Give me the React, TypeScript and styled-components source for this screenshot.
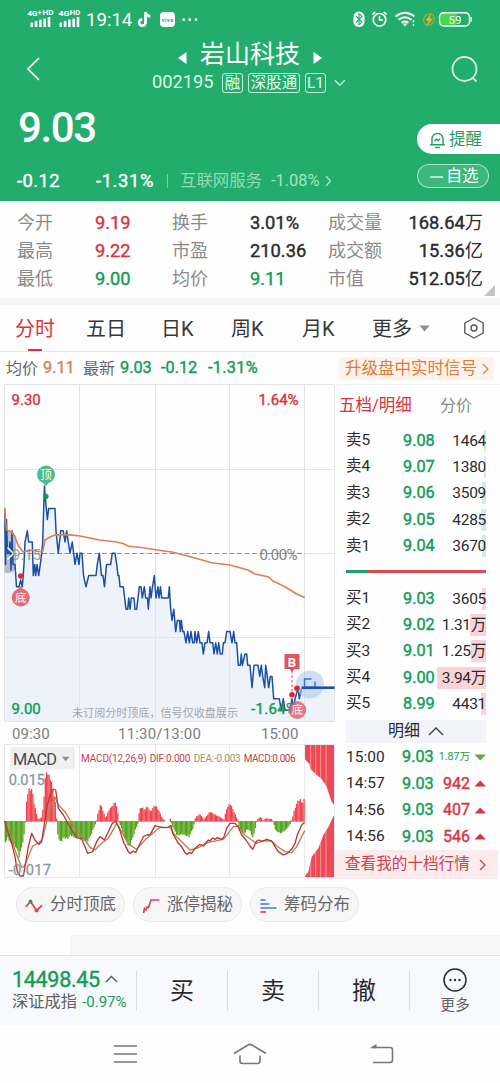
import React from "react";
import styled, { createGlobalStyle } from "styled-components";

const GREEN = "#22ad6d";
const DOWN = "#129c58";
const UP = "#d8343f";
const INK = "#2b2b2d";
const MUTED = "#8b8b8b";
const LINE = "#e6e6e8";

const GlobalStyle = createGlobalStyle`
  * { box-sizing: border-box; }
  body {
    margin: 0;
    background: #fff;
    font-family: Roboto, "Noto Sans CJK SC", sans-serif;
    color: ${INK};
  }
  svg { display: block; flex: none; }
`;

const Screen = styled.div`
  width: 500px;
  height: 1083px;
  overflow: hidden;
  display: flex;
  flex-direction: column;
  background: #fefefe;
`;

const Txt = styled.span<{ $size: number; $color?: string; $strong?: boolean; $ls?: number; $ml?: number; $w?: number }>`
  flex: none;
  font-size: ${(p) => p.$size}px;
  line-height: 1;
  white-space: nowrap;
  color: ${(p) => p.$color ?? "inherit"};
  -webkit-text-stroke: ${(p) => (p.$strong ? 0.4 : 0)}px currentColor;
  letter-spacing: ${(p) => p.$ls ?? 0}px;
  margin-left: ${(p) => p.$ml ?? 0}px;
  width: ${(p) => (p.$w ? `${p.$w}px` : "auto")};
`;

/* ---------- green header ---------- */

const Header = styled.header`
  height: 201px;
  flex: none;
  background: ${GREEN};
  color: #fff;
  display: flex;
  flex-direction: column;
`;

const StatusBar = styled.div`
  height: 38px;
  padding: 0 28px 0 27px;
  display: flex;
  justify-content: space-between;
`;

const StatusGroup = styled.div`
  display: flex;
  align-items: center;
`;

const Clock = styled.span`
  width: 50px;
  margin-left: 3px;
  padding-top: 3px;
  font-size: 18.6px;
  line-height: 1;
`;

const TitleRow = styled.div`
  height: 62px;
  padding: 0 22px 0 26px;
  display: flex;
`;

const TitleSide = styled.div`
  width: 27px;
  padding-top: 17px;
`;

const TitleBlock = styled.div`
  display: flex;
  flex-direction: column;
  align-items: flex-start;
  width: 194px;
  margin: 0 105px 0 99px;
`;

const NameLine = styled.div`
  display: flex;
  align-items: center;
  height: 32px;
  margin-left: 26px;
`;

const CodeLine = styled.div`
  display: flex;
  align-items: center;
  height: 25px;
`;

const Badge = styled.span<{ $w: number; $ml: number }>`
  width: ${(p) => p.$w}px;
  height: 20px;
  margin-left: ${(p) => p.$ml}px;
  border: 1px solid rgba(224, 255, 238, 0.85);
  border-radius: 3px;
  font-size: 15.5px;
  line-height: 18px;
  text-align: center;
  color: #e4fff0;
  white-space: nowrap;
  flex: none;
`;

const QuoteRow = styled.div`
  display: flex;
  justify-content: space-between;
  flex: 1;
`;

const PriceBlock = styled.div`
  padding: 7px 0 0 17px;
`;

const Price = styled.div`
  margin-left: 1px;
  font-size: 42px;
  line-height: 42px;
  font-weight: 500;
  letter-spacing: -1.4px;
`;

const ChangeLine = styled.div`
  display: flex;
  align-items: center;
  height: 20px;
  margin-top: 22px;
`;

const Divider = styled.i`
  width: 1px;
  height: 14px;
  margin-left: 11px;
  background: rgba(255, 255, 255, 0.4);
`;

const ActionCol = styled.div`
  width: 83px;
  padding-top: 24px;
  display: flex;
  flex-direction: column;
  gap: 10px;
`;

const AlertPill = styled.div`
  height: 30px;
  display: flex;
  align-items: center;
  padding: 2px 0 0 12px;
  gap: 3px;
  border-radius: 15px 0 0 15px;
  background: #fff;
  color: #2b9a68;
`;

const WatchPill = styled.div`
  width: 72px;
  height: 24px;
  display: flex;
  align-items: center;
  padding: 1px 0 0 12px;
  gap: 3px;
  border: 1px solid rgba(255, 255, 255, 0.6);
  border-radius: 12px;
  background: rgba(255, 255, 255, 0.12);
`;

/* ---------- summary grid ---------- */

const Summary = styled.section`
  height: 97px;
  flex: none;
  padding: 8px 5px 0 17px;
  display: flex;
  justify-content: space-between;
`;

const SummaryGrid = styled.div`
  display: grid;
  grid-template-columns: 78px 77px 78px 78px 155px;
  grid-template-rows: repeat(3, 28px);
  align-items: center;
`;

const Label = styled.span`
  font-size: 18px;
  line-height: 28px;
  color: ${MUTED};
  white-space: nowrap;
`;

const Value = styled.span<{ $color?: string }>`
  font-size: 18.3px;
  line-height: 28px;
  -webkit-text-stroke: 0.4px currentColor;
  color: ${(p) => p.$color ?? INK};
  white-space: nowrap;
`;

const Unit = styled.span`
  -webkit-text-stroke: 0;
`;

const LastPair = styled.div`
  display: flex;
  justify-content: space-between;
  align-items: center;
`;

const Band = styled.div`
  height: 7px;
  flex: none;
  background: #f6f6f7;
`;

/* ---------- period tabs ---------- */

const Tabs = styled.nav`
  height: 47px;
  flex: none;
  display: flex;
  align-items: stretch;
  padding-left: 15px;
  border-bottom: 1px solid ${LINE};
`;

const Tab = styled.div<{ $active?: boolean; $w: number }>`
  width: ${(p) => p.$w}px;
  display: flex;
  flex-direction: column;
  padding-top: 14px;
  font-size: 20px;
  line-height: 20px;
  white-space: nowrap;
  color: ${(p) => (p.$active ? UP : "#39393b")};
`;

const TabMark = styled.i`
  width: 14px;
  height: 2px;
  margin: 10px 0 0 13px;
  background: ${UP};
`;

const TabIcon = styled.div<{ $ml: number }>`
  display: flex;
  align-items: center;
  margin-left: ${(p) => p.$ml}px;
`;

const InfoRow = styled.div`
  height: 32px;
  flex: none;
  display: flex;
  align-items: center;
  padding: 1px 6px 0;
`;

const Upgrade = styled.div`
  width: 155px;
  height: 23px;
  margin-left: auto;
  padding: 1px 5px 0 6px;
  border-radius: 3px;
  background: #fdf3ec;
  display: flex;
  align-items: center;
  justify-content: space-between;
  color: #df7a38;
`;

/* ---------- main area ---------- */

const Main = styled.div`
  height: 495px;
  flex: none;
  display: flex;
`;

const ChartCol = styled.div`
  width: 336px;
  display: flex;
  flex-direction: column;
`;

const TimeAxis = styled.div`
  height: 22px;
  padding: 2px 0 0 12px;
  display: grid;
  grid-template-columns: 106px 143px 1fr;
  align-items: center;
  color: #7d7d80;
`;

const BookCol = styled.aside`
  width: 164px;
  border-top: 1px solid #f1f1f3;
`;

const BookTabs = styled.div`
  height: 42px;
  display: flex;
  align-items: center;
  padding-left: 3px;
`;

const Levels = styled.div`
  width: 140px;
  margin-left: 10px;
`;

const LevelRow = styled.div`
  height: 26.4px;
  padding-top: 1px;
  display: grid;
  grid-template-columns: 57px 34px 49px;
  align-items: center;
`;

const Volume = styled.span<{ $bar: number; $tint: string }>`
  height: 22px;
  text-align: right;
  font-size: 15.5px;
  line-height: 22px;
  letter-spacing: -0.3px;
  white-space: nowrap;
  background: linear-gradient(${(p) => p.$tint}, ${(p) => p.$tint}) right / ${(p) => p.$bar}px 100% no-repeat;
`;

const Ratio = styled.div`
  height: 3px;
  margin: 11px 0 12px;
  background: linear-gradient(90deg, #1f9d63 0 22px, #dd4a50 22px);
`;

const DetailHead = styled.div`
  height: 23px;
  margin: 3px 0 1px;
  background: #f2f4f9;
  display: flex;
  align-items: center;
  justify-content: center;
  gap: 8px;
`;

const TickRow = styled.div`
  height: 26.4px;
  padding-top: 1px;
  display: grid;
  grid-template-columns: 56px 34px 34px 16px;
  align-items: center;
  justify-items: start;
`;

const TickVolume = styled.span<{ $small?: boolean }>`
  justify-self: end;
  font-size: ${(p) => (p.$small ? 10.6 : 16)}px;
  line-height: 1;
  white-space: nowrap;
  color: ${(p) => (p.$small ? DOWN : UP)};
  -webkit-text-stroke: ${(p) => (p.$small ? 0 : 0.4)}px currentColor;
`;

const TenLevels = styled.div`
  width: 163px;
  height: 29px;
  margin: 1px 0 0 -1px;
  padding: 0 12px 0 10px;
  display: flex;
  align-items: center;
  justify-content: space-between;
  background: #fdecee;
  color: #d0414e;
`;

/* ---------- chips and bottom bars ---------- */

const Chips = styled.div`
  height: 56px;
  flex: none;
  padding: 8px 0 0 16px;
  display: flex;
  gap: 8px;
`;

const Chip = styled.div`
  width: 109px;
  height: 35px;
  padding: 2px 0 0 8px;
  display: flex;
  align-items: center;
  gap: 7px;
  border: 1px solid #e9e9ea;
  border-radius: 18px;
  background: #f7f7f8;
  color: #67676a;
`;

const Strip = styled.div`
  height: 20px;
  flex: none;
  margin-left: 70px;
  background: #f7f7f7;
`;

const TradeBar = styled.footer`
  height: 70px;
  flex: none;
  display: flex;
  align-items: center;
  border-top: 1px solid #e2e2e4;
  background: #f8f9fc;
`;

const IndexBox = styled.div`
  width: 136px;
  height: 42px;
  margin-top: -2px;
  padding-left: 12px;
  display: flex;
  flex-direction: column;
  justify-content: space-between;
`;

const IndexLine = styled.div`
  display: flex;
  align-items: center;
`;

const TradeButton = styled.div`
  width: 91px;
  height: 40px;
  display: flex;
  align-items: center;
  justify-content: center;
  border-left: 1px solid #dcdde0;
  font-size: 24px;
  line-height: 1;
`;

const MoreButton = styled(TradeButton)`
  flex-direction: column;
  gap: 6px;
`;

const SystemNav = styled.div`
  flex: 1;
  padding: 0 106px 0 113px;
  display: grid;
  grid-template-columns: 120px 136px 25px;
  align-items: center;
`;

/* ---------- data ---------- */

type Point = [number, number];

// x position and last price in cents above 9.00
const PRICES: Point[] = [
  [4.7, 19], [5.5, 14], [6.5, 18], [7.5, 15], [9, 15], [10, 16], [11, 13.5], [12, 17], [13, 14], [15, 14], [16.5, 12],
  [19, 12], [20.7, 12.6], [22.3, 12], [24, 14], [25, 16], [27.3, 17], [28.7, 16], [32.3, 16], [33.3, 13], [34.7, 14],
  [35.7, 13], [37, 14], [38.7, 13], [40.3, 14], [41.7, 15], [42.7, 16], [43.7, 19], [44.5, 21], [45.2, 20], [46.3, 19],
  [47.3, 18], [48.7, 19], [55, 19], [56, 17], [58.3, 15], [60.7, 17], [63.3, 17], [65, 16], [66.7, 17], [68.3, 16],
  [70, 15], [72.3, 16], [75, 14], [77, 15], [79, 14], [80, 15], [82, 15], [83.5, 13], [86, 12], [88.7, 13], [96, 13],
  [97.3, 14], [99.3, 15], [101.5, 13], [103, 13], [104.5, 12], [106.5, 14], [110.7, 14], [112.3, 15], [115, 15],
  [116.7, 14], [118, 13], [119, 13], [120, 12], [123.3, 12], [126, 10], [127.7, 10], [128.7, 11], [130, 10], [131.3, 11],
  [134, 11], [135, 10], [136.7, 10], [138, 11], [139.3, 12], [141, 12], [142.3, 11], [144.3, 12], [145.7, 11],
  [147.5, 11], [148.3, 10], [150, 12], [151, 11], [152.5, 12], [154.3, 13], [156, 11], [158, 12], [159, 11],
  [160.5, 12], [161.7, 11], [168.3, 11], [169.3, 12], [170.7, 10], [172, 9], [173.8, 10], [175.7, 8], [177.3, 9],
  [179.5, 9], [180.3, 8], [181.3, 9], [182.7, 8], [184, 8], [186, 7], [187.7, 8], [189.3, 7], [191, 8], [192.7, 7],
  [194.3, 7], [195, 8], [196.7, 7], [198.3, 8], [200, 7], [202, 7], [203.3, 6], [205, 7], [207, 7], [208.7, 8],
  [210, 7], [212.7, 7], [214, 6], [215.7, 7], [217.3, 6], [218.7, 7], [220.3, 6], [222.3, 6], [223.3, 7], [225, 7],
  [226.7, 8], [230, 8], [232, 7], [233.7, 8], [235, 7], [236.7, 7], [238.3, 5], [240.3, 5], [241.3, 6], [242.3, 5],
  [245, 6], [246.7, 6], [247.7, 5], [250, 5], [252, 3], [254, 5], [258, 5], [259.7, 4], [261.3, 5], [262.7, 4],
  [264.7, 3], [265.7, 5], [267.3, 4], [268.7, 3], [270.3, 4], [272, 4], [273.7, 2], [279.3, 2], [281.3, 1],
  [283.3, 2], [285, 1], [290, 1], [292, 2], [293.5, 1], [295, 2], [298.3, 3], [299.3, 2], [301.7, 3], [334.5, 3],
];

const AVERAGE: Point[] = [
  [4.7, 508], [5.5, 522], [6.7, 530], [11.7, 532], [15, 537], [18, 545], [22.7, 551.7], [28, 551], [32, 550],
  [39, 551.7], [42.7, 551.5], [45, 540], [50, 537], [55, 534.9], [70, 534.9], [80, 536], [100, 540], [115, 541.7],
  [123, 543.5], [128, 546], [143, 547.7], [157, 550], [171.7, 552], [180, 554], [195, 558], [211.7, 562.7],
  [230, 565], [248, 570], [255, 574], [268, 576.7], [273, 581], [285, 586.7], [296.7, 594], [304.7, 597.5],
];

const priceY = (c: number) => 553.2 + (15 - c) * 11.2;
const toLine = (pts: Point[]) => pts.map(([x, y]) => `${x},${y}`).join(" ");
const priceLine = toLine(PRICES.map(([x, c]): Point => [x, priceY(c)]));

// The indicator pane is drawn in thirds of a pixel.
const ZERO = 243;
const late = (pts: Point[]): Point[] => pts.map(([x, y]) => [x + 480, y]);

const HISTOGRAM: Point[] = [
  [14, 305], [22, 290], [30, 308], [40, 315], [48, 322], [55, 347], [62, 325], [70, 285], [74, 246], [76, 200],
  [79, 175], [83, 150], [95, 147], [98, 180], [105, 210], [112, 238], [118, 235], [123, 232], [128, 200], [132, 140],
  [137, 90], [142, 105], [150, 115], [156, 145], [160, 165], [166, 200], [168, 240], [170, 275], [178, 305],
  [190, 290], [200, 295], [210, 282], [220, 290], [235, 290], [245, 297], [260, 303], [270, 285], [280, 260],
  [287, 245], [291, 225], [300, 192], [308, 215], [315, 235], [325, 210], [345, 185], [351, 215], [354, 244],
  [360, 255], [370, 285], [385, 320], [395, 295], [405, 265], [413, 246], [416, 210], [425, 200], [430, 210],
  [440, 200], [450, 215], [463, 195], [475, 212], [485, 235], [495, 243], [504, 243],
  ...late([
    [26, 243], [28, 232], [31, 244], [38, 262], [50, 285], [65, 280], [85, 288], [98, 262], [102, 244], [105, 232],
    [118, 222], [130, 238], [148, 215], [165, 225], [180, 232], [190, 240], [198, 205], [208, 190], [220, 215],
    [232, 240], [235, 255], [240, 270], [250, 280], [260, 265], [268, 270], [277, 292], [284, 262], [288, 244],
    [292, 236], [300, 230], [307, 242], [315, 235], [333, 237], [338, 244], [345, 270], [360, 278], [375, 268],
    [388, 252], [392, 243], [395, 235], [400, 215], [410, 185], [418, 178], [425, 190], [430, 180], [434, 190],
  ]),
];

const DIF: Point[] = [
  [14, 243], [25, 280], [35, 310], [45, 350], [52, 395], [60, 408], [70, 408], [76, 375], [85, 320], [95, 280],
  [105, 300], [117, 313], [125, 305], [132, 260], [140, 205], [150, 165], [160, 147], [167, 150], [175, 205],
  [190, 225], [200, 243], [215, 270], [230, 293], [245, 297], [255, 320], [263, 340], [278, 335], [290, 305],
  [300, 290], [313, 300], [325, 275], [337, 250], [347, 243], [358, 265], [370, 305], [385, 335], [390, 340],
  [400, 333], [407, 338], [418, 315], [430, 290], [440, 285], [450, 285], [465, 257], [475, 260], [490, 263],
  ...late([
    [25, 262], [33, 256], [38, 280], [55, 310], [65, 320], [75, 338], [82, 343], [88, 337], [95, 340], [105, 325],
    [120, 313], [130, 318], [145, 300], [150, 303], [158, 294], [165, 298], [172, 293], [185, 298], [192, 290],
    [200, 265], [210, 250], [225, 250], [235, 262], [245, 285], [258, 300], [270, 318], [278, 328], [290, 303],
    [297, 300], [305, 305], [320, 298], [335, 303], [345, 320], [355, 335], [370, 345], [382, 340], [395, 328],
    [405, 310], [412, 285], [425, 255], [434, 247],
  ]),
];

const DEA: Point[] = [
  [14, 243], [30, 285], [50, 345], [65, 382], [72, 380], [85, 350], [98, 318], [115, 310], [128, 295], [140, 245],
  [155, 190], [165, 172], [175, 195], [195, 215], [210, 240], [230, 270], [255, 300], [270, 322], [285, 330],
  [305, 310], [325, 295], [340, 268], [350, 250], [365, 275], [385, 312], [410, 328], [435, 300], [460, 278],
  [480, 262], [500, 262],
  ...late([
    [30, 262], [45, 285], [65, 305], [90, 330], [110, 325], [145, 307], [190, 298], [205, 280], [220, 260],
    [235, 258], [250, 282], [275, 300], [290, 310], [310, 302], [335, 303], [350, 318], [375, 335], [395, 338],
    [410, 320], [425, 290], [434, 272],
  ]),
];

const sample = (pts: Point[], x: number) => {
  const i = Math.max(1, pts.findIndex((p) => p[0] >= x));
  const [x0, y0] = pts[i - 1];
  const [x1, y1] = pts[i];
  return y0 + ((y1 - y0) * (x - x0)) / (x1 - x0);
};

const BARS = Array.from({ length: 240 }, (_, i) => {
  const x = 14 + i * 3.75;
  const h = ZERO - sample(HISTOGRAM, x);
  return { x, h: h * (1 + 0.05 * Math.sin(i * 2.4)) };
});

const STATS = [
  ["今开", "9.19", UP, "换手", "3.01%", INK, "成交量", "168.64", "万"],
  ["最高", "9.22", UP, "市盈", "210.36", INK, "成交额", "15.36", "亿"],
  ["最低", "9.00", DOWN, "均价", "9.11", DOWN, "市值", "512.05", "亿"],
];

const SELLS: [string, string, string, number][] = [
  ["卖5", "9.08", "1464", 2],
  ["卖4", "9.07", "1380", 2],
  ["卖3", "9.06", "3509", 4],
  ["卖2", "9.05", "4285", 5],
  ["卖1", "9.04", "3670", 4],
];

const BUYS: [string, string, string, number][] = [
  ["买1", "9.03", "3605", 4],
  ["买2", "9.02", "1.31万", 16],
  ["买3", "9.01", "1.25万", 15],
  ["买4", "9.00", "3.94万", 49],
  ["买5", "8.99", "4431", 5],
];

const TICKS: [string, string, boolean][] = [
  ["15:00", "1.87万", false],
  ["14:57", "942", true],
  ["14:56", "407", true],
  ["14:56", "546", true],
];

/* ---------- drawings ---------- */

const Chevron = ({ w, h, d, color, sw = 1.3, ml = 0 }: { w: number; h: number; d: string; color: string; sw?: number; ml?: number }) => (
  <svg width={w + ml} height={h} viewBox={`${-ml} 0 ${w + ml} ${h}`} fill="none" stroke={color} strokeWidth={sw}>
    <path d={d} />
  </svg>
);

const SignalIcons = () => (
  <svg width="56" height="20" viewBox="27 9 56 20" fill="#fff">
    <g fontFamily="Roboto" fontWeight="700" fontSize="8">
      <text x="27.500" y="16" textLength="10" lengthAdjust="spacingAndGlyphs">4G</text>
      <text x="37.800" y="14.500" fontSize="7">+</text>
      <text x="42.500" y="15" fontSize="6.500" textLength="11" lengthAdjust="spacingAndGlyphs">HD</text>
      <text x="58.500" y="16" textLength="11" lengthAdjust="spacingAndGlyphs">4G</text>
      <text x="69.800" y="15" fontSize="6.500" textLength="10.500" lengthAdjust="spacingAndGlyphs">HD</text>
    </g>
    {[30.5, 59.5].map((x) =>
      [4.5, 6, 7.5, 8.5, 10].map((h, i) => (
        <rect key={`${x}-${i}`} x={x + i * 4.3} y={27 - h} width="2.600" height={h} rx="0.500" />
      ))
    )}
  </svg>
);

const StatusRight = () => (
  <svg width="122" height="22" viewBox="350 8 122 22" fill="none" stroke="#fff">
    <rect x="353.500" y="11.500" width="11" height="15.500" rx="5.500" fill="#fff" stroke="none" />
    <path d="M356 16l6 6-3 2.800v-11l3 2.700-6 6" stroke={GREEN} strokeWidth="1.100" />
    <circle cx="379.500" cy="19.800" r="6.300" strokeWidth="1.700" />
    <path d="M379.500 16v4h3.500M372.300 14.500l3-2.700M386.700 14.500l-3-2.700" strokeWidth="1.600" />
    <path d="M395.500 16.500q9.500-7.500 19 0M398.500 19.800q6.500-5 13 0M401.500 22.800q3.500-2.500 7 0" strokeWidth="2" />
    <path d="M402.500 23.500h5l-2.500 3z" fill="#fff" stroke="none" />
    <path d="M413.500 20v2.500M413.500 24v2" strokeWidth="1.500" />
    <ellipse cx="429" cy="19.500" rx="5" ry="6" transform="rotate(35 429 19.500)" stroke="#b8a51f" strokeWidth="1.200" />
    <path d="M431.500 13l-6 7.500h3l-2 6 6.500-8h-3.500z" fill="#f3b229" stroke="none" />
    <rect x="440" y="13" width="17" height="13" rx="3.500" fill="#45d84b" stroke="none" />
    <rect x="439.500" y="12.700" width="30" height="13.300" rx="4.300" strokeWidth="1.400" />
    <path d="M471.200 17v4.500" strokeWidth="1.600" />
    <text x="448.500" y="23.600" fill="#fff" stroke="none" fontFamily="Roboto" fontSize="11.500">59</text>
  </svg>
);

const PriceChart = () => (
  <svg width="336" height="338" viewBox="0 384 336 338">
    <polygon points={`4.5,721.5 ${priceLine} 334.5,721.5`} fill="#eef3fb" />
    <path
      d="M4.500 384.500H334.500V721.500H4.500zM79.500 384.500V721.500M155.500 384.500V721.500M229.500 384.500V721.500M304.500 384.500V721.500M4.500 469.500H334.500M4.500 637.500H334.500M304 553.500H334.500"
      stroke="#e1e4e9"
      fill="none"
    />
    <path d="M4.500 553.500H305" stroke="#8f8f92" strokeDasharray="5 2.500" />
    <path d="M4.500 531h4.500a7 7 0 0 1 7 7v28a7 7 0 0 1-7 7H4.500z" fill="#7d8390" opacity="0.500" />
    <polyline points={priceLine} fill="none" stroke="#1c4fa6" strokeWidth="1.500" strokeLinejoin="round" />
    <polyline points={toLine(AVERAGE)} fill="none" stroke="#df7f50" strokeWidth="1.600" strokeLinejoin="round" />
    <path d="M7.500 547.500l6 6-6 6" fill="none" stroke="#fff" strokeWidth="1.500" />
    <g fontFamily="Roboto" fontSize="15" strokeWidth="0.400">
      <text x="11.500" y="405" fill={UP} stroke={UP}>9.30</text>
      <text x="258.500" y="405" fill={UP} stroke={UP} textLength="40">1.64%</text>
      <text x="11.500" y="713.500" fill={DOWN} stroke={DOWN}>9.00</text>
      <text x="251" y="713.500" fill={DOWN} stroke={DOWN} textLength="46">-1.64%</text>
      <text x="12" y="559.500" fill="#8d8f7c" opacity="0.850">9.15</text>
      <text x="259.500" y="559.500" fill="#808083" textLength="38">0.00%</text>
    </g>
    <text x="72" y="716.500" fill="#a3a6ad" fontFamily="Noto Sans CJK SC" fontSize="11.100" textLength="166">
      未订阅分时顶底，信号仅收盘展示
    </text>
    <circle cx="46" cy="474.500" r="9" fill="#4dbb8a" />
    <path d="M43 482.500h6l-3 3.500z" fill="#4dbb8a" />
    <circle cx="45.800" cy="496.500" r="2.800" fill="#0f9a57" />
    <circle cx="20.700" cy="597.500" r="9" fill="#e66a73" />
    <path d="M17.500 589.500h6l-3-3.500z" fill="#e66a73" />
    <circle cx="20.700" cy="576" r="2.800" fill="#e0283d" />
    <circle cx="310" cy="684.500" r="14" fill="#a9c3ee" opacity="0.550" />
    <path d="M311.500 679H304.500V687.500H315V681.500" fill="none" stroke="#3272df" strokeWidth="1.400" />
    <path d="M302 687.700H334.500" stroke="#1c4fa6" strokeWidth="2.400" />
    <path d="M292 671V694" stroke="#df5560" strokeWidth="1.200" strokeDasharray="2.500 2" />
    <path d="M284.500 654h15v15h-5l-2.500 3-2.500-3h-5z" fill="#e4525f" />
    <circle cx="292" cy="694.700" r="2.800" fill="#d9283a" />
    <circle cx="297" cy="688.300" r="2.800" fill="#d9283a" />
    <circle cx="297.300" cy="710" r="9" fill="#dd5d66" opacity="0.800" />
    <g fill="#fff" fontFamily="Noto Sans CJK SC" fontSize="11.500" textAnchor="middle">
      <text x="46" y="478.800">顶</text>
      <text x="20.700" y="601.800">底</text>
      <text x="297.300" y="714.200">底</text>
      <text x="292" y="666.500" fontFamily="Roboto" fontWeight="700" fontSize="13">B</text>
    </g>
  </svg>
);

const MacdChart = () => (
  <svg width="336" height="135" viewBox="0 12 1008 405">
    <g stroke="#e6e8ec" strokeWidth="3" fill="none">
      <path d="M13.500 13.500H1003.500V412.500H13.500zM238.500 13V412M466.500 13V412M688.500 13V412M914 13V412" />
    </g>
    <rect x="30" y="22" width="195" height="66" rx="8" fill="#efeff0" />
    {BARS.map((b) => (
      <rect
        key={b.x}
        x={b.x}
        y={b.h > 0 ? ZERO - b.h : ZERO}
        width="3.900"
        height={Math.abs(b.h) + (Math.abs(b.h) > 1 ? 2 : 0)}
        fill={b.h > 0 ? "#f4434f" : "#55a51c"}
      />
    ))}
    <clipPath id="spike">
      <path d="M915 15H1002V195L995 185 988 165 980 140 965 117 950 105 932 88 928 72 915 58zM915 412V408L925 395 935 350 955 325 970 285 985 262 1002 225V412z" />
    </clipPath>
    <g clipPath="url(#spike)">
      <rect x="915" y="14" width="87" height="399" fill="#ee4a56" />
      <path d="M932 15V412M947 15V412M962 15V412M978 15V412" stroke="#fbb9bd" strokeWidth="2" />
    </g>
    <g fill="none" strokeLinejoin="round" strokeWidth="4">
      <polyline points={toLine(DEA)} stroke="#b0864e" />
      <polyline points={toLine(DIF)} stroke="#c42f3c" />
    </g>
    <g fontFamily="Roboto">
      <text x="39" y="75" fontSize="49" fill="#4a4a4d" textLength="132">MACD</text>
      <path d="M186 50h22l-11 14z" fill="#8f8f92" />
      <g fontSize="30">
        <text x="243" y="65" fill="#c43e49" textLength="197">MACD(12,26,9)</text>
        <text x="449" y="65" fill="#c43e49" textLength="122">DIF:0.000</text>
        <text x="581" y="65" fill="#a8946a" textLength="141">DEA:-0.003</text>
        <text x="731" y="65" fill="#c43e49" textLength="156">MACD:0.006</text>
      </g>
      <g fontSize="44" fill="#8497a3" stroke="#8497a3" strokeWidth="0.800">
        <text x="26" y="134" textLength="108">0.015</text>
        <text x="26" y="405" textLength="127">-0.017</text>
      </g>
    </g>
  </svg>
);

const BookLevel = ({ row, tint }: { row: [string, string, string, number]; tint: string }) => (
  <LevelRow>
    <Txt $size={15.5}>{row[0]}</Txt>
    <Txt $size={16.3} $strong $color={DOWN}>{row[1]}</Txt>
    <Volume $bar={row[3]} $tint={tint}>{row[2]}</Volume>
  </LevelRow>
);

export default function App() {
  return (
    <Screen>
      <GlobalStyle />
      <Header>
        <StatusBar>
          <StatusGroup>
            <SignalIcons />
            <Clock>19:14</Clock>
            <svg width="62" height="20" viewBox="136 9 62 20" fill="#fff">
              <path d="M145.500 12v10.500a3.200 3.200 0 1 1-3.200-3.200M145.500 12q.8 4 4.800 4.300" fill="none" stroke="#fff" strokeWidth="2.700" />
              <rect x="160" y="12" width="15" height="15" rx="4" />
              <text x="161.800" y="21.500" fontFamily="Roboto" fontSize="5.500" fontWeight="700" fill={GREEN} textLength="11.500">vivo</text>
              <circle cx="183.700" cy="19.700" r="1.400" />
              <circle cx="189.700" cy="19.700" r="1.400" />
              <circle cx="196" cy="19.700" r="1.400" />
            </svg>
          </StatusGroup>
          <StatusGroup>
            <StatusRight />
          </StatusGroup>
        </StatusBar>
        <TitleRow>
          <TitleSide>
            <Chevron w={15} h={28} d="M13 3L2 14l11 11" color="#fff" sw={1.7} />
          </TitleSide>
          <TitleBlock>
            <NameLine>
              <svg width="22" height="20" viewBox="0 0 22 20"><path d="M8.500 8v12L0 14z" fill="#fff" /></svg>
              <Txt $size={25}>岩山科技</Txt>
              <svg width="22" height="20" viewBox="0 0 22 20"><path d="M13.500 8v12l8.500-6z" fill="#fff" /></svg>
            </NameLine>
            <CodeLine>
              <Txt $size={18.3} $color="#d9fae8" $w={70}>002195</Txt>
              <Badge $w={21} $ml={0}>融</Badge>
              <Badge $w={52} $ml={5}>深股通</Badge>
              <Badge $w={21} $ml={5}>L1</Badge>
              <Chevron w={12} h={8} ml={8} d="M.8 1.200l5 5 5-5" color="#c8f3dc" />
            </CodeLine>
          </TitleBlock>
          <TitleSide>
            <svg width="28" height="28" viewBox="0 0 28 28" fill="none" stroke="#d6efdc" strokeWidth="1.800">
              <circle cx="13.500" cy="14" r="12" />
              <path d="M21.500 22.500l4 4" />
            </svg>
          </TitleSide>
        </TitleRow>
        <QuoteRow>
          <PriceBlock>
            <Price>9.03</Price>
            <ChangeLine>
              <Txt $size={18.4} $strong $ls={0.4} $w={79}>-0.12</Txt>
              <Txt $size={18.4} $strong $ls={0.6} $w={60}>-1.31%</Txt>
              <Divider />
              <Txt $size={16.4} $ml={12} $color="#8fdcb4">互联网服务</Txt>
              <Txt $size={16.4} $ml={9} $color="#a4e5c3">-1.08%</Txt>
              <Chevron w={6} h={12} ml={6} d="M1 1l4.500 5L1 11" color="#a4e5c3" />
            </ChangeLine>
          </PriceBlock>
          <ActionCol>
            <AlertPill>
              <svg width="17" height="18" viewBox="0 0 17 18" fill="none" stroke="#2b9a68" strokeWidth="1.400">
                <path d="M3 13.500V8a5.500 5.500 0 0 1 11 0v5.500M1 13.700h15M6 16.500h5M5.500 10l2-1.800 1.500 1.300 2.200-2" />
              </svg>
              <Txt $size={16.500}>提醒</Txt>
            </AlertPill>
            <WatchPill>
              <svg width="13" height="4" viewBox="0 0 13 4"><path d="M0 2h13" stroke="#fff" strokeWidth="1.300" /></svg>
              <Txt $size={16.300}>自选</Txt>
            </WatchPill>
          </ActionCol>
        </QuoteRow>
      </Header>

      <Summary>
        <SummaryGrid>
          {STATS.map((r) => (
            <React.Fragment key={r[0]}>
              <Label>{r[0]}</Label>
              <Value $color={r[2]}>{r[1]}</Value>
              <Label>{r[3]}</Label>
              <Value $color={r[5]}>{r[4]}</Value>
              <LastPair>
                <Label>{r[6]}</Label>
                <Value>{r[7]}<Unit>{r[8]}</Unit></Value>
              </LastPair>
            </React.Fragment>
          ))}
        </SummaryGrid>
        <svg width="11" height="89" viewBox="0 0 11 89"><path d="M11 76v11H0z" fill="#c4c4c6" /></svg>
      </Summary>
      <Band />

      <Tabs>
        <Tab $active $w={71}>分时<TabMark /></Tab>
        <Tab $w={75}>五日</Tab>
        <Tab $w={70}>日K</Tab>
        <Tab $w={71}>周K</Tab>
        <Tab $w={70}>月K</Tab>
        <Tab $w={41}>更多</Tab>
        <TabIcon $ml={6}>
          <svg width="11" height="7" viewBox="0 0 11 7"><path d="M.5.500h10l-5 6z" fill="#8c8c8f" /></svg>
        </TabIcon>
        <TabIcon $ml={33}>
          <svg width="22" height="24" viewBox="0 0 22 24" fill="none" stroke="#58585b" strokeWidth="1.400" strokeLinejoin="round">
            <path d="M11 2l9.200 5v10L11 22l-9.200-5V7z" />
            <circle cx="11" cy="12" r="3" />
          </svg>
        </TabIcon>
      </Tabs>

      <InfoRow>
        <Txt $size={16} $color="#66666a" $w={37}>均价</Txt>
        <Txt $size={16.3} $strong $color="#d98351" $w={40}>9.11</Txt>
        <Txt $size={16} $color="#66666a" $w={37}>最新</Txt>
        <Txt $size={16.3} $strong $color={DOWN} $w={41}>9.03</Txt>
        <Txt $size={16.3} $strong $color={DOWN} $w={47}>-0.12</Txt>
        <Txt $size={16.3} $strong $color={DOWN} $ls={0.3}>-1.31%</Txt>
        <Upgrade>
          <Txt $size={16.5}>升级盘中实时信号</Txt>
          <Chevron w={7} h={12} d="M1 1l5 5-5 5" color="#df7a38" sw={1.1} />
        </Upgrade>
      </InfoRow>

      <Main>
        <ChartCol>
          <PriceChart />
          <TimeAxis>
            <Txt $size={15} $ls={0.1}>09:30</Txt>
            <Txt $size={15} $ls={0.2}>11:30/13:00</Txt>
            <Txt $size={15}>15:00</Txt>
          </TimeAxis>
          <MacdChart />
        </ChartCol>
        <BookCol>
          <BookTabs>
            <Txt $size={16.5} $color={UP} $w={101}>五档/明细</Txt>
            <Txt $size={16} $color={MUTED}>分价</Txt>
          </BookTabs>
          <Levels>
            {SELLS.map((r) => <BookLevel key={r[0]} row={r} tint="#cfeedd" />)}
            <Ratio />
            {BUYS.map((r) => <BookLevel key={r[0]} row={r} tint="#fbd3d7" />)}
            <DetailHead>
              <Txt $size={16}>明细</Txt>
              <Chevron w={16} h={10} d="M1 9l7-7 7 7" color="#3b3b3d" sw={1.4} />
            </DetailHead>
            {TICKS.map(([time, vol, up], i) => (
              <TickRow key={i}>
                <Txt $size={15.5}>{time}</Txt>
                <Txt $size={16.3} $strong $color={DOWN}>9.03</Txt>
                <TickVolume $small={!up}>{vol}</TickVolume>
                <svg width="16" height="7" viewBox="0 0 16 7">
                  {up ? <path d="M4.500 6.500h11.500L10.200.500z" fill={UP} /> : <path d="M4.500.500h11.500l-5.800 6z" fill="#5aa845" />}
                </svg>
              </TickRow>
            ))}
          </Levels>
          <TenLevels>
            <Txt $size={15.6}>查看我的十档行情</Txt>
            <Chevron w={7} h={12} d="M1 1l5 5-5 5" color="#d0414e" />
          </TenLevels>
        </BookCol>
      </Main>

      <Chips>
        <Chip>
          <svg width="18" height="16" viewBox="0 0 18 16" fill="none" stroke="#de4653" strokeWidth="1.800">
            <path d="M.8 9l4.700-5.500 6 9L17 7.500" />
            <circle cx="5.500" cy="3.500" r="2" fill="#1f9d63" stroke="none" />
            <circle cx="11.500" cy="12.500" r="2" fill="#de4653" stroke="none" />
          </svg>
          <Txt $size={16.5}>分时顶底</Txt>
        </Chip>
        <Chip>
          <svg width="18" height="16" viewBox="0 0 18 16" fill="none" stroke="#de4653" strokeWidth="1.700">
            <path d="M1.500 15l1-4.500 1.500 1.500 1-3 1.500.5L9 2H17.500" />
          </svg>
          <Txt $size={16.5}>涨停揭秘</Txt>
        </Chip>
        <Chip>
          <svg width="18" height="16" viewBox="0 0 18 16" fill="none" stroke="#3f78e0" strokeWidth="1.700">
            <path d="M1.500 2h5M1.500 6h9M1.500 10h16" />
            <path d="M1.500 14h5.500" stroke="#de4653" />
          </svg>
          <Txt $size={16.5}>筹码分布</Txt>
        </Chip>
      </Chips>
      <Strip />

      <TradeBar>
        <IndexBox>
          <IndexLine>
            <Txt $size={21.5} $strong $color={DOWN} $ls={-0.3}>14498.45</Txt>
            <Chevron w={13} h={8} ml={5} d="M1 7l5.500-5.500L12 7" color="#55565a" />
          </IndexLine>
          <IndexLine>
            <Txt $size={16.300} $color="#606064">深证成指</Txt>
            <Txt $size={15} $ml={5} $color={DOWN}>-0.97%</Txt>
          </IndexLine>
        </IndexBox>
        <TradeButton>买</TradeButton>
        <TradeButton>卖</TradeButton>
        <TradeButton>撤</TradeButton>
        <MoreButton>
          <svg width="24" height="24" viewBox="0 0 24 24" fill="#2b2b2d">
            <circle cx="12" cy="12" r="11" fill="none" stroke="#2b2b2d" strokeWidth="1.500" />
            <circle cx="7.500" cy="12" r="1.200" />
            <circle cx="12" cy="12" r="1.200" />
            <circle cx="16.500" cy="12" r="1.200" />
          </svg>
          <Txt $size={14.8} $color="#606064">更多</Txt>
        </MoreButton>
      </TradeBar>

      <SystemNav>
        <svg width="25" height="20" viewBox="0 0 25 20" fill="none" stroke="#77777a" strokeWidth="1.600">
          <path d="M1 2h23M1 10h23M1 18h23" />
        </svg>
        <svg width="34" height="22" viewBox="0 0 34 22" fill="none" stroke="#77777a" strokeWidth="1.600">
          <path d="M1 10.500L15 2q2-1.200 4 0l14 8.500M7 12.500V18q0 2.500 2.500 2.500h15Q27 20.500 27 18v-5.500" />
        </svg>
        <svg width="25" height="22" viewBox="0 0 25 22" fill="none" stroke="#77777a" strokeWidth="1.600">
          <path d="M4 4.500h17q2.500 0 2.500 2.500v10q0 2.500-2.500 2.500H4" />
          <path d="M7.500 1v4.300H.500z" fill="#77777a" stroke="none" />
        </svg>
      </SystemNav>
    </Screen>
  );
}
